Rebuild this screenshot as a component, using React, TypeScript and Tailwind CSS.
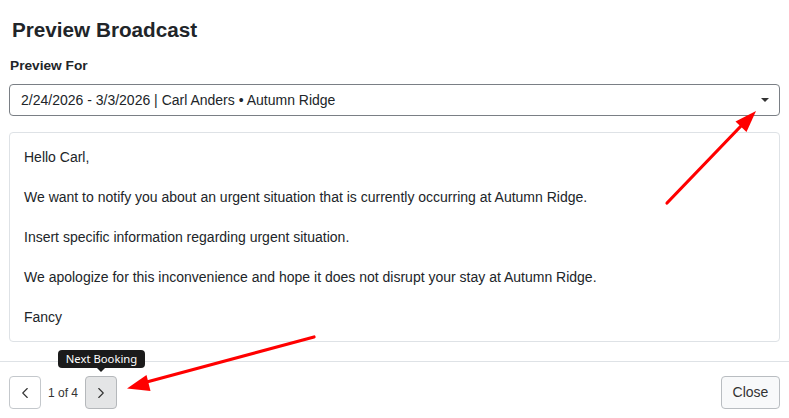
import { ChevronLeft, ChevronRight } from "lucide-react";

const paragraphs = [
  "Hello Carl,",
  "We want to notify you about an urgent situation that is currently occurring at Autumn Ridge.",
  "Insert specific information regarding urgent situation.",
  "We apologize for this inconvenience and hope it does not disrupt your stay at Autumn Ridge.",
  "Fancy",
];

export default function App() {
  return (
    <div className="relative w-[789px] h-[418px] overflow-hidden bg-white text-[#212529] font-['Liberation_Sans',Arial,sans-serif]">
      {/* Header */}
      <div className="px-[12px] pt-[17px]">
        <h2 className="text-[20.7px] leading-[26px] font-bold">Preview Broadcast</h2>
      </div>

      {/* Body */}
      <div className="px-[9px] pt-[15px]">
        <label className="block text-[13.7px] leading-[16px] font-bold pl-px">Preview For</label>
        <div className="mt-[10px] h-[32px] flex items-center justify-between rounded-[4px] border border-[#7a7f85] pl-[11px] pr-[10px]">
          <span className="text-[14px] leading-[16px]">2/24/2026 - 3/3/2026 | Carl Anders • Autumn Ridge</span>
          <span className="w-0 h-0 border-l-[4.5px] border-r-[4.5px] border-t-[4.5px] border-l-transparent border-r-transparent border-t-[#333]" />
        </div>

        <div className="mt-[16px] rounded-[4px] border border-[#dee2e6] px-[14px] py-[14px] flex flex-col gap-[20px]">
          {paragraphs.map((p) => (
            <p key={p} className="text-[14px] leading-[20px]">
              {p}
            </p>
          ))}
        </div>
      </div>

      {/* Footer */}
      <div className="absolute left-0 right-0 bottom-0 h-[57px] border-t border-[#dee2e6] px-[9px] pt-[14px] flex items-start justify-between">
        <div className="flex items-center">
          <button className="w-[32px] h-[33px] flex items-center justify-center rounded-[4px] border border-[#c4c8cc] bg-white text-[#333]">
            <ChevronLeft size={18} strokeWidth={1.5} />
          </button>
          <span className="ml-[7px] mr-[7px] text-[12px] leading-[16px] text-[#333]">1 of 4</span>
          <button className="w-[32px] h-[33px] flex items-center justify-center rounded-[4px] border border-[#b5b8bb] bg-[#e4e5e6] text-[#333]">
            <ChevronRight size={18} strokeWidth={1.5} />
          </button>
        </div>
        <button className="w-[59px] h-[33px] rounded-[4px] border border-[#b9bdc1] bg-[#f8f9fa] text-[14px] text-[#333]">
          Close
        </button>
      </div>

      {/* Tooltip */}
      <div className="absolute left-[58px] top-[350px] w-[87px] h-[18px] rounded-[4px] bg-[#1b1b1b] flex items-center justify-center">
        <span className="text-[11.3px] leading-[14px] text-white font-['Noto_Sans',sans-serif]">Next Booking</span>
        <span className="absolute left-[39px] top-[18px] w-0 h-0 border-l-[4px] border-r-[4px] border-t-[4px] border-l-transparent border-r-transparent border-t-[#1b1b1b]" />
      </div>

      {/* Annotation arrows */}
      <svg className="absolute inset-0 pointer-events-none" width="789" height="418" viewBox="0 0 789 418">
        <line x1="667" y1="203" x2="741" y2="126" stroke="#ff0000" strokeWidth="3.2" strokeLinecap="round" />
        <polygon points="756,111 735.5,121.5 746.5,132" fill="#ff0000" />
        <line x1="314" y1="337" x2="143" y2="383" stroke="#ff0000" strokeWidth="3.2" strokeLinecap="round" />
        <polygon points="127,388.5 146.5,375 150.5,391" fill="#ff0000" />
      </svg>
    </div>
  );
}
